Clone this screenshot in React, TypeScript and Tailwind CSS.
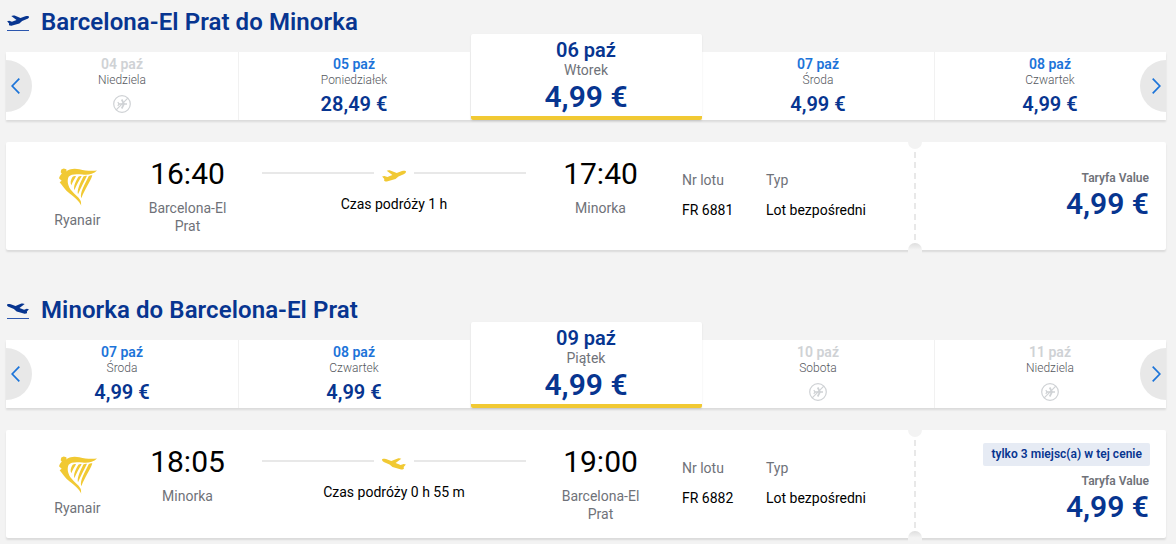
import clsx from "clsx";

type Day = {
  date: string;
  weekday: string;
  price?: string;
  selected?: boolean;
};

type Flight = {
  title: string;
  landing?: boolean;
  days: Day[];
  departure: string;
  from: string;
  arrival: string;
  to: string;
  duration: string;
  number: string;
  seatsLeft?: string;
};

const flights: Flight[] = [
  {
    title: "Barcelona-El Prat do Minorka",
    days: [
      { date: "04 paź", weekday: "Niedziela" },
      { date: "05 paź", weekday: "Poniedziałek", price: "28,49 €" },
      { date: "06 paź", weekday: "Wtorek", price: "4,99 €", selected: true },
      { date: "07 paź", weekday: "Środa", price: "4,99 €" },
      { date: "08 paź", weekday: "Czwartek", price: "4,99 €" },
    ],
    departure: "16:40",
    from: "Barcelona-El Prat",
    arrival: "17:40",
    to: "Minorka",
    duration: "1 h",
    number: "FR 6881",
  },
  {
    title: "Minorka do Barcelona-El Prat",
    landing: true,
    days: [
      { date: "07 paź", weekday: "Środa", price: "4,99 €" },
      { date: "08 paź", weekday: "Czwartek", price: "4,99 €" },
      { date: "09 paź", weekday: "Piątek", price: "4,99 €", selected: true },
      { date: "10 paź", weekday: "Sobota" },
      { date: "11 paź", weekday: "Niedziela" },
    ],
    departure: "18:05",
    from: "Minorka",
    arrival: "19:00",
    to: "Barcelona-El Prat",
    duration: "0 h 55 m",
    number: "FR 6882",
    seatsLeft: "tylko 3 miejsc(a) w tej cenie",
  },
];

function Plane({ landing, className }: { landing?: boolean; className?: string }) {
  return (
    <svg
      viewBox="0 0 24 11.5"
      fill="currentColor"
      className={clsx(className, landing && "-scale-x-100")}
    >
      <path d="M4.700.8C5.800.1 7.200 0 8.300.4l6.400 2.600L20 1.100c2.200-.7 3.800-.4 4 .5.200 1.100-.9 2-2.300 2.600L16.500 6.400 13.500 9l-7.800 2.200c-1.600.4-3.100.2-3.600-.8L2.300 9 .1 6.600l2.300-.7 3 1.200 5-2z" />
    </svg>
  );
}

function Harp() {
  return (
    <svg viewBox="0 0 114 113" className="h-[38px] w-[38px]" fill="#f1c933">
      <path d="M7 4 14 1l8 2 1 8-3 7H10L5 12z" />
      <path d="M20 12C29 1 47 0 61 3c19 5 34 6 53 4-11 11-28 14-44 12-17-2-35-2-41 7-6 12-2 30 9 42 10 12 20 18 26 28 4 6 1 12 3 17C60 97 47 88 31 75 17 64 10 51 2 42l6-4L0 30c2-7 7-12 11-17z" />
      <path d="M41 26c3-3 8-3 10-2-5 9-10 16-14 27-4-6-2-16 4-25zM58 26c3-3 8-3 10-2-9 14-15 26-22 42-3-12 4-26 12-40zM73 25c4-3 9-3 11-2C76 40 67 56 57 78c-4-12 7-34 16-53zM89 24c4-3 9-3 11-2C92 44 79 60 67 90c-6-16 11-43 22-66z" />
    </svg>
  );
}

function NoFlight() {
  return (
    <svg viewBox="0 0 18 18" fill="none" stroke="#cfd2d5" className="h-[18px] w-[18px]">
      <circle cx="9" cy="9" r="8.300" strokeWidth="1.200" />
      <path d="M4.800 7.200 6 9l-1.200 1.800" strokeWidth="1.200" />
      <path d="M5.500 9H14M8.700 4.500 11 9l-2.300 4.500" strokeWidth="1.700" />
      <path d="M3.200 14.800 14.800 3.200" strokeWidth="1.200" />
    </svg>
  );
}

function Arrow({ right }: { right?: boolean }) {
  return (
    <button
      className={clsx(
        "absolute top-2 flex h-[52px] w-[26px] items-center bg-[#e8e8e8] text-[#1c74d9]",
        right ? "right-0 rounded-l-full justify-end pr-[5px]" : "left-0 rounded-r-full pl-[5px]"
      )}
    >
      <svg
        viewBox="0 0 9 16"
        fill="none"
        stroke="currentColor"
        strokeWidth="1.700"
        className={clsx("h-4 w-[9px]", right && "rotate-180")}
      >
        <path d="M8.300.7 1.200 8l7.100 7.300" />
      </svg>
    </button>
  );
}

function DayItem({ day, last }: { day: Day; last: boolean }) {
  if (day.selected) {
    return (
      <div className="-mt-[18px] h-[86px] w-[231px] mr-px rounded-[2px] border-b-4 border-[#f1c933] bg-white pt-1 pr-px text-center shadow-[0_1px_2px_rgba(0,0,0,0.1)]">
        <div className="text-xl leading-6 font-semibold text-[#073590]">{day.date}</div>
        <div className="text-sm leading-4 text-[#6f7279]">{day.weekday}</div>
        <div className="mt-[3px] text-[30px] leading-8 font-semibold text-[#073590]">{day.price}</div>
      </div>
    );
  }

  return (
    <div
      className={clsx(
        "flex h-[68px] flex-col items-center pt-1 pr-px",
        last ? "w-[231px]" : "w-[232px] border-r border-[#f1f1f1]"
      )}
    >
      <div
        className={clsx(
          "text-sm leading-4 font-semibold",
          day.price ? "text-[#1c74d9]" : "text-[#cfd2d5]"
        )}
      >
        {day.date}
      </div>
      <div className="text-xs leading-4 font-light text-[#55585e]">{day.weekday}</div>
      {day.price ? (
        <div className="mt-1 text-xl leading-6 font-semibold text-[#073590]">{day.price}</div>
      ) : (
        <div className="mt-[7px]">
          <NoFlight />
        </div>
      )}
    </div>
  );
}

function Stop({ time, place }: { time: string; place: string }) {
  return (
    <div className="w-[81px] text-center">
      <div className="text-[30px] leading-8 text-black">{time}</div>
      <div className="mt-[9px] text-sm leading-[18px] text-[#6f7279]">{place}</div>
    </div>
  );
}

function Section({ flight }: { flight: Flight }) {
  return (
    <section className="h-[288px]">
      <div className="flex h-[52px] items-start">
        <div className="mt-[15px] ml-px w-[22px] border-b border-[#2b56ae] pb-1 text-[#073590]">
          <Plane landing={flight.landing} className="h-[11px] w-[22px]" />
        </div>
        <h2 className="ml-3 pt-1.5 text-2xl leading-8 font-semibold tracking-[0.08px] text-[#073590]">
          {flight.title}
        </h2>
      </div>

      <div className="relative flex h-[68px] bg-white pl-px shadow-[0_2px_2px_rgba(0,0,0,0.1)]">
        {flight.days.map((day, i) => (
          <DayItem key={day.date} day={day} last={i === flight.days.length - 1} />
        ))}
        <Arrow />
        <Arrow right />
      </div>

      <div className="mt-[22px] flex h-[108px] rounded-[2px] bg-white shadow-[0_2px_2px_rgba(0,0,0,0.1)]">
        <div className="flex w-[902px] shrink-0 pt-4">
          <div className="flex w-[143px] flex-col items-center pt-[10px]">
            <Harp />
            <div className="mt-[5px] text-sm leading-[18px] text-[#6f7279]">Ryanair</div>
          </div>
          <div className="-ml-0.5">
            <Stop time={flight.departure} place={flight.from} />
          </div>
          <div className="ml-[34px] w-[264px] pt-[9px] text-center">
            <div className="flex h-[18px] items-center justify-between">
              <div className="mb-[6px] h-0.5 w-[112px] bg-[#e8e8e8]" />
              <Plane landing={flight.landing} className="h-[11.500px] w-6 text-[#f1c933]" />
              <div className="mb-[6px] h-0.5 w-[112px] bg-[#e8e8e8]" />
            </div>
            <div className="mt-[10px] text-sm leading-[18px] text-black">
              Czas podróży {flight.duration}
            </div>
          </div>
          <div className="ml-[34px]">
            <Stop time={flight.arrival} place={flight.to} />
          </div>
          <div className="ml-[41px] flex pt-[13px] text-sm leading-[18px]">
            <div className="w-[84px]">
              <div className="text-[#6f7279]">Nr lotu</div>
              <div className="mt-3 text-black">{flight.number}</div>
            </div>
            <div>
              <div className="text-[#6f7279]">Typ</div>
              <div className="mt-3 whitespace-nowrap text-black">Lot bezpośredni</div>
            </div>
          </div>
        </div>

        <div className="flex h-[112px] w-[14px] flex-col items-center">
          <div className="h-[7px] w-[14px] shrink-0 rounded-b-full bg-[#f3f3f3]" />
          <div className="mt-[3px] h-[88px] w-0.5 bg-[repeating-linear-gradient(to_bottom,#e8e8e8_0_6px,transparent_6px_10.250px)]" />
          <div className="mt-[3px] h-[11px] w-[14px] shrink-0 rounded-t-[7px] bg-linear-to-b from-[#dedede] to-[#f3f3f3] to-60%" />
        </div>

        <div className="flex flex-1 flex-col items-end justify-center pr-4 pb-px">
          {flight.seatsLeft && (
            <div className="mb-[7px] h-[23px] rounded-[2px] bg-[#e6ebf4] px-2 text-xs leading-[23px] font-semibold tracking-[0.03px] text-[#073590]">
              {flight.seatsLeft}
            </div>
          )}
          <div className="pr-px text-xs leading-4 font-semibold text-[#6f7279]">Taryfa Value</div>
          <div className="pr-px text-[30px] leading-[35px] font-semibold text-[#073590]">4,99 €</div>
        </div>
      </div>
    </section>
  );
}

export default function App() {
  return (
    <div className="h-[544px] w-[1176px] overflow-hidden bg-[#f3f3f3] pr-[10px] pl-1.5 font-['Roboto',sans-serif]">
      {flights.map((flight) => (
        <Section key={flight.title} flight={flight} />
      ))}
    </div>
  );
}
